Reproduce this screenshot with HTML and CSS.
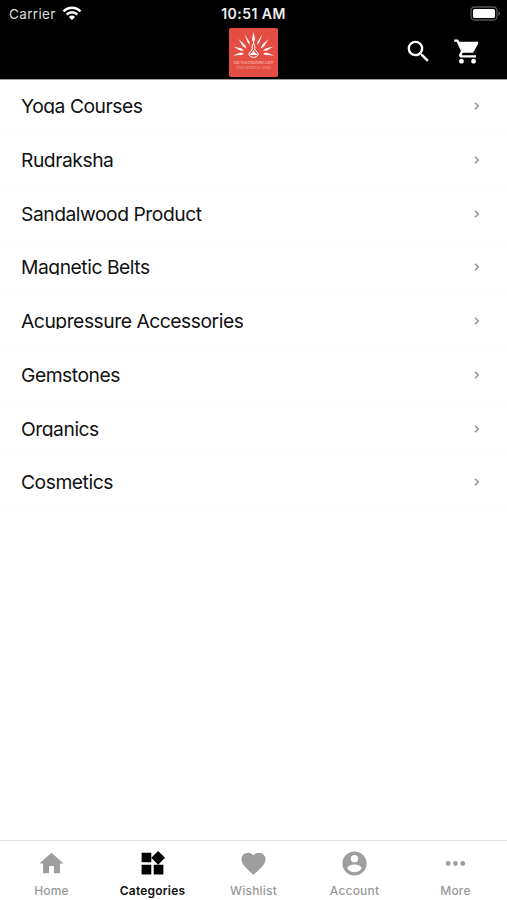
FILE: index.html
```html
<!DOCTYPE html>
<html lang="en">
<head>
<meta charset="utf-8">
<title>Categories</title>
<link rel="stylesheet" href="styles.css">
</head>
<body>
<div class="app">
<header class="header">
<div class="status">
<div class="carrier"><span class="carrier-name">Carrier</span><svg width="20" height="15" viewBox="0 0 20 15" fill="none" stroke="#fff" stroke-width="2.5"><path d="M1.500 5.300a12.200 12.200 0 0 1 17 0M4.700 8.500a7.500 7.500 0 0 1 10.600 0"/><path d="M6.900 10.900a4.400 4.400 0 0 1 6.200 0L10 14z" fill="#fff" stroke="none"/></svg></div>
<div class="time">10:51 AM</div>
<svg class="battery" width="31" height="15" viewBox="0 0 31 15"><rect x="1" y="1" width="26" height="13" rx="3.5" fill="none" stroke="#555" stroke-width="1.3"/><rect x="3" y="3" width="22" height="9" rx="1.5" fill="#fff"/><path d="M28.500 5v5q3-2.500 0-5" fill="#666"/></svg>
</div>
<div class="toolbar">
<div class="logo">
<svg width="49" height="29" viewBox="0 0 49 29" fill="#fff"><path d="M24.500 2l1.500 7-1.500 5-1.500-5zM15.500 4l5 8 .2 3-2.200-3zM33.500 4l-5 8-.2 3 2.200-3zM9.500 9l6.500 6 1.500 3.500-3.500-2zM39.500 9L33 15l-1.500 3.500 3.500-2zM4.500 16.500l8 2 2.500 2.300-4-.4zM44.500 16.500l-8 2-2.500 2.300 4-.4zM4 26q5-3.500 9-3.200l2 1.200-3 1q-4-.2-8 1zM45 26q-5-3.500-9-3.200l-2 1.200 3 1q4-.2 8 1z"/><path d="M24.500 13l-1.500 4 .5 2-4 5q1.500 3.500 5 3.500t5-3.500l-4-5 .5-2z" fill="none" stroke="#fff" stroke-width="1"/><path d="M20.500 25q1-2 2.500-2.300l1.500-2.700 1.500 2.700q1.500.3 2.500 2.300z"/></svg>
<span class="logo-name">DEVOTIONMART</span>
<span class="logo-tag">YOUR SPIRITUAL STORE</span>
</div>
<div class="actions">
<svg width="29" height="29" viewBox="0 0 24 24" fill="#fff"><path d="M15.500 14h-.79l-.28-.27A6.470 6.470 0 0 0 16 9.500 6.500 6.500 0 1 0 9.500 16c1.610 0 3.090-.59 4.230-1.570l.27.28v.79l5 4.990L20.490 19l-4.990-5zm-6 0C7.010 14 5 11.990 5 9.500S7.010 5 9.500 5 14 7.010 14 9.500 11.990 14 9.500 14z"/></svg>
<svg width="29" height="29" viewBox="0 0 24 24" fill="#fff"><path d="M7 18c-1.100 0-1.990.9-1.990 2S5.900 22 7 22s2-.9 2-2-.9-2-2-2zM1 2v2h2l3.600 7.590-1.350 2.450c-.16.28-.25.61-.25.96 0 1.100.9 2 2 2h12v-2H7.420c-.14 0-.25-.11-.25-.25l.03-.12.900-1.630h7.450c.75 0 1.410-.41 1.750-1.030l3.580-6.490c.08-.14.12-.31.12-.48 0-.55-.45-1-1-1H5.210l-.94-2H1zm16 16c-1.100 0-1.990.9-1.990 2s.89 2 1.990 2 2-.9 2-2-.9-2-2-2z"/></svg>
</div>
</div>
</header>
<main class="list">
<div class="row"><span class="label">Yoga Courses</span><svg class="chevron" viewBox="0 0 6 8"><path d="M1 .8L4.300 4 1 7.200"/></svg></div>
<div class="row"><span class="label">Rudraksha</span><svg class="chevron" viewBox="0 0 6 8"><path d="M1 .8L4.300 4 1 7.200"/></svg></div>
<div class="row"><span class="label">Sandalwood Product</span><svg class="chevron" viewBox="0 0 6 8"><path d="M1 .8L4.300 4 1 7.200"/></svg></div>
<div class="row"><span class="label">Magnetic Belts</span><svg class="chevron" viewBox="0 0 6 8"><path d="M1 .8L4.300 4 1 7.200"/></svg></div>
<div class="row"><span class="label">Acupressure Accessories</span><svg class="chevron" viewBox="0 0 6 8"><path d="M1 .8L4.300 4 1 7.200"/></svg></div>
<div class="row"><span class="label">Gemstones</span><svg class="chevron" viewBox="0 0 6 8"><path d="M1 .8L4.300 4 1 7.200"/></svg></div>
<div class="row"><span class="label">Organics</span><svg class="chevron" viewBox="0 0 6 8"><path d="M1 .8L4.300 4 1 7.200"/></svg></div>
<div class="row"><span class="label">Cosmetics</span><svg class="chevron" viewBox="0 0 6 8"><path d="M1 .8L4.300 4 1 7.200"/></svg></div>
</main>
<nav class="tabs">
<div class="tab"><svg viewBox="0 0 24 24"><path d="M10 20v-6h4v6h5v-8h3L12 3 2 12h3v8z"/></svg><span>Home</span></div>
<div class="tab active"><svg viewBox="0 0 24 24"><path d="M13 13v8h8v-8h-8zM3 21h8v-8H3v8zM3 3v8h8V3H3zm13.660-1.310L11 7.340 16.660 13l5.660-5.660-5.660-5.650z"/></svg><span>Categories</span></div>
<div class="tab"><svg viewBox="0 0 24 24"><path d="M12 21.350l-1.450-1.320C5.400 15.360 2 12.280 2 8.500 2 5.420 4.420 3 7.500 3c1.740 0 3.410.81 4.500 2.090C13.090 3.810 14.760 3 16.500 3 19.580 3 22 5.420 22 8.500c0 3.780-3.400 6.860-8.550 11.540L12 21.350z"/></svg><span>Wishlist</span></div>
<div class="tab"><svg viewBox="0 0 24 24"><path fill-rule="evenodd" d="M12 2a10 10 0 1 0 0 20 10 10 0 0 0 0-20zm0 3a3 3 0 1 1 0 6 3 3 0 0 1 0-6zm0 14.200a7.200 7.200 0 0 1-6-3.220c.03-1.990 4-3.080 6-3.080s5.970 1.090 6 3.080a7.200 7.200 0 0 1-6 3.220z"/></svg><span>Account</span></div>
<div class="tab"><svg viewBox="0 0 24 24"><path d="M6 10a2 2 0 1 0 0 4 2 2 0 0 0 0-4zm12 0a2 2 0 1 0 0 4 2 2 0 0 0 0-4zm-6 0a2 2 0 1 0 0 4 2 2 0 0 0 0-4z"/></svg><span>More</span></div>
</nav>
</div>
</body>
</html>
```
FILE: styles.css
```css
* { box-sizing: border-box; }
body { margin: 0; background: #fff; font-family: Inter, "Liberation Sans", sans-serif; }
svg { display: block; flex: none; }
.app { width: 507px; height: 900px; display: flex; flex-direction: column; }
.header { height: 80px; background: #000; color: #fff; flex: none; border-bottom: 1px solid #a0a0a0; }
.status, .toolbar { display: grid; grid-template-columns: 1fr auto 1fr; }
.status { height: 27px; align-items: center; padding: 0 6px 0 9px; }
.carrier { display: flex; align-items: center; gap: 6px; font-size: 13.500px; color: #ddd; }
.carrier-name { letter-spacing: 0.350px; }
.time { font-size: 14px; font-weight: 600; letter-spacing: 0.450px; color: #eee; margin-right: 3px; }
.battery { justify-self: end; }
.toolbar { height: 50px; }
.logo { grid-column: 2; width: 49px; height: 49px; margin-top: 1px; border-radius: 2px; background: #e34d42; display: flex; flex-direction: column; align-items: center; padding-top: 2px; color: #ffc9c1; white-space: nowrap; }
.logo-name { font: 5px/7px "Liberation Serif", serif; }
.logo-tag { font: 3px/4px "Liberation Serif", serif; opacity: .7; }
.actions { display: flex; gap: 20px; justify-content: flex-end; padding: 10px 25px 0 0; }
.list { flex: 1; }
.row { height: 53.750px; display: flex; justify-content: space-between; padding: 14px 27px 0 21px; border-bottom: 1px solid #fcfcfc; }
.label { height: 20px; overflow: hidden; font-size: 19.300px; letter-spacing: -0.470px; line-height: 24px; color: #111; white-space: nowrap; }
.chevron { width: 6px; height: 8px; margin-top: 8px; fill: none; stroke: #929292; stroke-width: 1.500; }
.tabs { height: 60px; flex: none; display: grid; grid-template-columns: repeat(5, 101px); justify-content: center; border-top: 1px solid #e3e3e3; }
.tab { display: flex; flex-direction: column; align-items: center; color: #999; font-size: 12px; font-weight: 500; line-height: 16px; padding-top: 8px; letter-spacing: 0.200px; }
.tab svg { width: 29px; height: 29px; fill: #9e9e9e; margin-bottom: 5px; }
.tab.active { color: #111; font-weight: 600; }
.tab.active svg { fill: #000; }
```
